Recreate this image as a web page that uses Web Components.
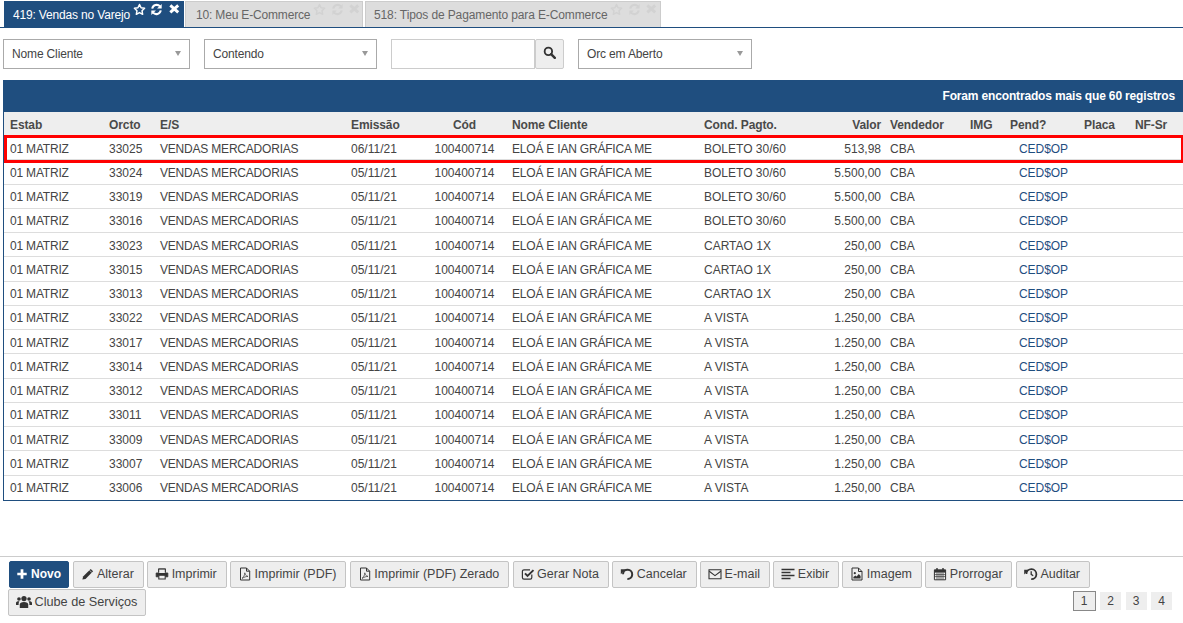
<!DOCTYPE html>
<html lang="pt-BR"><head><meta charset="utf-8"><title>Vendas no Varejo</title>
<style>
html,body{margin:0;padding:0;background:#fff;overflow:hidden}
body{font:12px "Liberation Sans",Arial,sans-serif;color:#444;height:623px}
</style></head><body>
<erp-app></erp-app>
<script>
const ICONS={
star:'<path d="M7 1.6l1.7 3.5 3.8.55-2.75 2.7.65 3.8L7 10.35l-3.4 1.8.65-3.8-2.75-2.7 3.8-.55z" fill="none" stroke="currentColor" stroke-width="1.6" stroke-linejoin="round"/>',
refresh:'<path d="M2.4 6A4.9 4.9 0 0 1 10.8 3.6" fill="none" stroke="currentColor" stroke-width="2.2"/><path d="M12.6 1v5h-5z" fill="currentColor"/><path d="M11.6 8A4.9 4.9 0 0 1 3.2 10.4" fill="none" stroke="currentColor" stroke-width="2.2"/><path d="M1.4 13V8h5z" fill="currentColor"/>',
times:'<path d="M2.5 2.5l8.5 7.5M11 2.5l-8.500 7.5" fill="none" stroke="currentColor" stroke-width="3.2"/>',
search:'<circle cx="5.8" cy="5.8" r="4" fill="none" stroke="currentColor" stroke-width="2"/><path d="M8.8 8.8l3.9 3.9" stroke="currentColor" stroke-width="2.6" stroke-linecap="round"/>',
plus:'<path d="M7 1.5v11M1.5 7h11" stroke="currentColor" stroke-width="3.2"/>',
pencil:'<path d="M9.7 1.9l2.4 2.4-7.6 7.6L1.4 12.6l.7-3.1z" fill="currentColor"/><path d="M8.5 3.2l2.4 2.4" stroke="#eee" stroke-width=".7"/>',
print:'<path d="M3.5 5.5V1.8h7v3.7M3.5 9.8H1.2V6h11.6v3.8h-2.3" fill="currentColor" stroke="currentColor" stroke-width=".9"/><path d="M4.2 2.6h5.6V6H4.2z" fill="#eee"/><path d="M3.8 8.2h6.4v3.8H3.8z" fill="#eee" stroke="currentColor" stroke-width="1.1"/>',
pdf:'<path d="M2.5 1h6l3.2 3.2V13h-9.2z M8.5 1v3.2h3.2" fill="none" stroke="currentColor" stroke-width="1"/><path d="M4 11.4c1.6-1 2.8-3.4 2.8-5.6.2 2 1.4 3.3 3.2 3.6-1.8 0-3.8.7-6 2z" fill="none" stroke="currentColor" stroke-width=".7"/>',
check:'<path d="M10.8 7.6v3a1.6 1.6 0 0 1-1.6 1.6H3a1.6 1.6 0 0 1-1.6-1.6V4.4A1.6 1.6 0 0 1 3 2.8h6" fill="none" stroke="currentColor" stroke-width="1.2"/><path d="M4 6.4l2.5 2.5 6-5.8" fill="none" stroke="currentColor" stroke-width="2"/>',
undo:'<path d="M3 7.2A4.6 4.6 0 1 1 7.4 12" fill="none" stroke="currentColor" stroke-width="2"/><path d="M.8 2.2l5 0-5 5z" fill="currentColor"/>',
mail:'<path d="M1 2.8h12v9H1z" fill="none" stroke="currentColor" stroke-width="1.1"/><path d="M1.2 4.2L7 8.6l5.8-4.4" fill="none" stroke="currentColor" stroke-width="1.1"/>',
align:'<path d="M.5 2.5h13M.5 5.5h9M.5 8.5h13M.5 11.5h9" stroke="currentColor" stroke-width="1.6"/>',
image:'<path d="M2 1h6.5L12 4.5V13H2z M8.5 1v3.5H12" fill="none" stroke="currentColor" stroke-width="1"/><circle cx="4.8" cy="6.2" r="1.1" fill="currentColor"/><path d="M3.4 11.5v-1.4l2-1.6 1.2 1 2.2-2.5 1.8 2v2.5z" fill="currentColor"/>',
calendar:'<path d="M1.4 2.8h11.2v10H1.4z" fill="none" stroke="currentColor" stroke-width="1"/><path d="M1.4 3h11.2v2.6H1.4z" fill="currentColor"/><path d="M4 1v3M10 1v3" stroke="currentColor" stroke-width="1.4"/><path d="M1.5 7.6h11M1.5 9.6h11M4 5.6v7M6 5.6v7M8 5.6v7M10 5.6v7" stroke="currentColor" stroke-width=".7"/>',
history:'<path d="M2.4 7A5 5 0 1 1 7.2 12.2" fill="none" stroke="currentColor" stroke-width="1.8"/><path d="M.2 2.8l4.6 0-4.6 4.6z" fill="currentColor"/><path d="M7.2 4.2v3.2l2 1.4" fill="none" stroke="currentColor" stroke-width="1.3"/>',
users:'<circle cx="7" cy="4" r="2.3" fill="currentColor"/><circle cx="2.6" cy="4.4" r="1.6" fill="currentColor"/><circle cx="11.4" cy="4.4" r="1.6" fill="currentColor"/><path d="M3.3 12.2V9.2C3.3 7.6 4.6 6.9 7 6.9s3.7.7 3.7 2.3v3z" fill="currentColor"/><path d="M0 9.6V7.9c0-1 .8-1.5 2.6-1.5l.4.1c-.5.5-.7 1.1-.7 2v1.1zM14 9.6V7.9c0-1-.8-1.5-2.6-1.5l-.4.1c.5.5.7 1.1.7 2v1.1z" fill="currentColor"/>'
};
function svg(name,size){return `<svg viewBox="0 0 14 14" width="${size}" height="${size}" aria-hidden="true" style="display:block;flex:none">${ICONS[name]}</svg>`}

class ErpTab extends HTMLElement{
  connectedCallback(){
    const a=this.hasAttribute('active');
    this.attachShadow({mode:'open'}).innerHTML=`<style>
    :host{display:flex;box-sizing:border-box;height:26px;border:1px solid ${a?'#1f4e7f':'#ccc'};border-bottom:0;background:${a?'#1f4e7f':'#ddd'};color:${a?'#fff':'#666'};padding-left:${this.getAttribute('pad')||8}px;align-items:flex-start;white-space:nowrap;font-size:12px;letter-spacing:-.17px}
    .t{line-height:26px}
    .i{display:flex;gap:4.5px;margin-left:3px;margin-top:1px;color:${a?'#fff':'#d2d2d2'}}
    </style><span class="t"><slot></slot></span><span class="i">${svg('star',13)}${svg('refresh',13)}${svg('times',13)}</span>`;
  }
}
class ErpSelect extends HTMLElement{
  connectedCallback(){
    this.attachShadow({mode:'open'}).innerHTML=`<style>
    :host{display:flex;box-sizing:border-box;height:30px;border:1px solid #aaa;background:#fff;align-items:center;justify-content:space-between;padding:0 8px 0 8px;font-size:12px;color:#444;letter-spacing:-.15px}
    i{width:0;height:0;border:3.5px solid transparent;border-top:5px solid #999;border-bottom:0;margin-top:-2px}
    </style><span><slot></slot></span><i></i>`;
  }
}
class ErpSearch extends HTMLElement{
  connectedCallback(){
    this.attachShadow({mode:'open'}).innerHTML=`<style>
    :host{display:flex;height:30px}
    .f{box-sizing:border-box;width:144px;border:1px solid #ccc;background:#fff}
    .b{box-sizing:border-box;width:29px;border:1px solid #ccc;border-radius:2px;background:#eee;color:#333;display:flex;align-items:center;justify-content:center;padding-bottom:3px}
    </style><div class="f"></div><div class="b">${svg('search',13)}</div>`;
  }
}
class ErpTable extends HTMLElement{
  connectedCallback(){
    const cols=[['Estab',99],['Orcto',51],['E/S',191],['Emissão',75],['Cód',86,'c'],['Nome Cliente',192],['Cond. Pagto.',102],['Valor',84,'r'],['Vendedor',80],['IMG',40],['Pend?',74],['Placa',51],['NF-Sr',54]];
    const data=[['33025','06/11/21','BOLETO 30/60','513,98'],['33024','05/11/21','BOLETO 30/60','5.500,00'],['33019','05/11/21','BOLETO 30/60','5.500,00'],['33016','05/11/21','BOLETO 30/60','5.500,00'],['33023','05/11/21','CARTAO 1X','250,00'],['33015','05/11/21','CARTAO 1X','250,00'],['33013','05/11/21','CARTAO 1X','250,00'],['33022','05/11/21','A VISTA','1.250,00'],['33017','05/11/21','A VISTA','1.250,00'],['33014','05/11/21','A VISTA','1.250,00'],['33012','05/11/21','A VISTA','1.250,00'],['33011','05/11/21','A VISTA','1.250,00'],['33009','05/11/21','A VISTA','1.250,00'],['33007','05/11/21','A VISTA','1.250,00'],['33006','05/11/21','A VISTA','1.250,00']];
    const cell=(t,c)=>`<div class="${c||''}">${t}</div>`;
    const head=cols.map(c=>cell(c[0],c[2])).join('');
    const rows=data.map((d,i)=>{
      const v=['<span class="n">01 MATRIZ</span>',d[0],'<span class="n">VENDAS MERCADORIAS</span>',d[1],'100400714','<span class="n">ELOÁ E IAN GRÁFICA ME</span>',d[2],d[3],'CBA','','<span class="p">CED$OP</span>','',''];
      return `<div class="row${i==0?' sel':''}">`+v.map((t,j)=>cell(t,cols[j][2])).join('')+'</div>';
    }).join('');
    this.attachShadow({mode:'open'}).innerHTML=`<style>
    :host{display:block;box-sizing:border-box;border-left:1px solid #1f4e7f;border-bottom:1px solid #1f4e7f;margin-left:3px;font-size:12px;color:#444;overflow:hidden}
    .bar{height:32px;margin-left:-1px;background:#1f4e7f;color:#fff;font-weight:bold;display:flex;align-items:center;justify-content:flex-end;padding-right:8px;letter-spacing:-.16px}
    .row,.hd{display:grid;grid-template-columns:${cols.map(c=>c[1]+'px').join(' ')};align-items:center}
    .hd{height:24px;background:#eee;font-weight:bold;color:#4a4a4a;padding-top:1px;box-sizing:border-box;letter-spacing:-.1px}
    .row{box-sizing:border-box;height:24.25px;padding-top:2px;border-bottom:1px solid #ddd;position:relative}
    .row:last-child{border-bottom:0;padding-top:1px}
    .row>div,.hd>div{padding:0 3px 0 6px;white-space:nowrap;box-sizing:border-box;min-width:0}
    .c{text-align:center}.r{text-align:right}
    .n{letter-spacing:-.2px}
    .p{color:#1f4e7f;margin-left:9px;letter-spacing:-.05px}
    .sel::after{content:"";position:absolute;top:-1px;left:0;right:-1px;bottom:-4px;border:3px solid #f00;pointer-events:none;z-index:1}
    </style><div class="bar">Foram encontrados mais que 60 registros</div><div class="hd">${head}</div>${rows}`;
  }
}
class ErpBtn extends HTMLElement{
  connectedCallback(){
    const p=this.hasAttribute('primary');
    const ic=this.getAttribute('icon');
    this.attachShadow({mode:'open'}).innerHTML=`<style>
    :host{display:inline-flex;box-sizing:border-box;height:27px;align-items:center;gap:${p?3:2.5}px;padding:${p?'0 7px 0 6px':'0 8.8px 0 7px'};border:1px solid ${p?'#1f4e7f':'#c4c4c4'};border-radius:2px;background:${p?'#1f4e7f':'#eee'};color:${p?'#fff':'#444'};font-size:${p?12:12.5}px;white-space:nowrap;font-weight:${p?'bold':'normal'}}
    span{display:flex;color:${p?'#fff':'#333'}}
    </style><span>${svg(ic,p?12:(ic=='users'?16:14))}</span><slot></slot>`;
  }
}
class ErpPager extends HTMLElement{
  connectedCallback(){
    this.attachShadow({mode:'open'}).innerHTML=`<style>
    :host{display:flex;gap:4.5px;align-items:center;margin:-1px 11px 0 auto;font-size:12px;color:#444;height:26px}
    div{box-sizing:border-box;width:21px;height:18px;line-height:18px;text-align:center;background:#eee}
    .on{width:23px;height:20px;line-height:18px;border:1px solid #888}
    </style><div class="on">1</div><div>2</div><div>3</div><div>4</div>`;
  }
}
class ErpApp extends HTMLElement{
  connectedCallback(){
    this.attachShadow({mode:'open'}).innerHTML=`<style>
    :host{display:block;height:623px;overflow:hidden}
    .tabs{display:flex;box-sizing:border-box;height:28px;padding:1px 0 0 4px;gap:1px;border-bottom:1px solid #1f4e7f}
    .filters{display:flex;margin:11px 0 11px 3px;align-items:flex-start}
    .foot{margin-top:55px;border-top:1px solid #ccc;padding:4px 0 0 9px;display:flex;flex-wrap:wrap;column-gap:3.5px;row-gap:1px}
    </style>
    <div class="tabs">
      <erp-tab active style="width:180px">419: Vendas no Varejo</erp-tab>
      <erp-tab pad="10" style="width:178px;margin-right:1px">10: Meu E-Commerce</erp-tab>
      <erp-tab pad="8" style="width:296px;letter-spacing:-.12px">518: Tipos de Pagamento para E-Commerce</erp-tab>
    </div>
    <div class="filters">
      <erp-select style="width:187px;margin-right:14px">Nome Cliente</erp-select>
      <erp-select style="width:173px;margin-right:14px">Contendo</erp-select>
      <erp-search style="margin-right:14px"></erp-search>
      <erp-select style="width:174px">Orc em Aberto</erp-select>
    </div>
    <erp-table></erp-table>
    <div class="foot">
      <erp-btn primary icon="plus">Novo</erp-btn>
      <erp-btn icon="pencil">Alterar</erp-btn>
      <erp-btn icon="print">Imprimir</erp-btn>
      <erp-btn icon="pdf">Imprimir (PDF)</erp-btn>
      <erp-btn icon="pdf">Imprimir (PDF) Zerado</erp-btn>
      <erp-btn icon="check">Gerar Nota</erp-btn>
      <erp-btn icon="undo">Cancelar</erp-btn>
      <erp-btn icon="mail">E-mail</erp-btn>
      <erp-btn icon="align">Exibir</erp-btn>
      <erp-btn icon="image">Imagem</erp-btn>
      <erp-btn icon="calendar">Prorrogar</erp-btn>
      <erp-btn icon="history">Auditar</erp-btn>
      <erp-btn icon="users" style="font-size:12.7px;margin-left:-1px;padding-right:7.5px">Clube de Serviços</erp-btn>
      <erp-pager></erp-pager>
    </div>`;
  }
}
customElements.define('erp-tab',ErpTab);
customElements.define('erp-select',ErpSelect);
customElements.define('erp-search',ErpSearch);
customElements.define('erp-table',ErpTable);
customElements.define('erp-btn',ErpBtn);
customElements.define('erp-pager',ErpPager);
customElements.define('erp-app',ErpApp);
</script>
</body></html>
